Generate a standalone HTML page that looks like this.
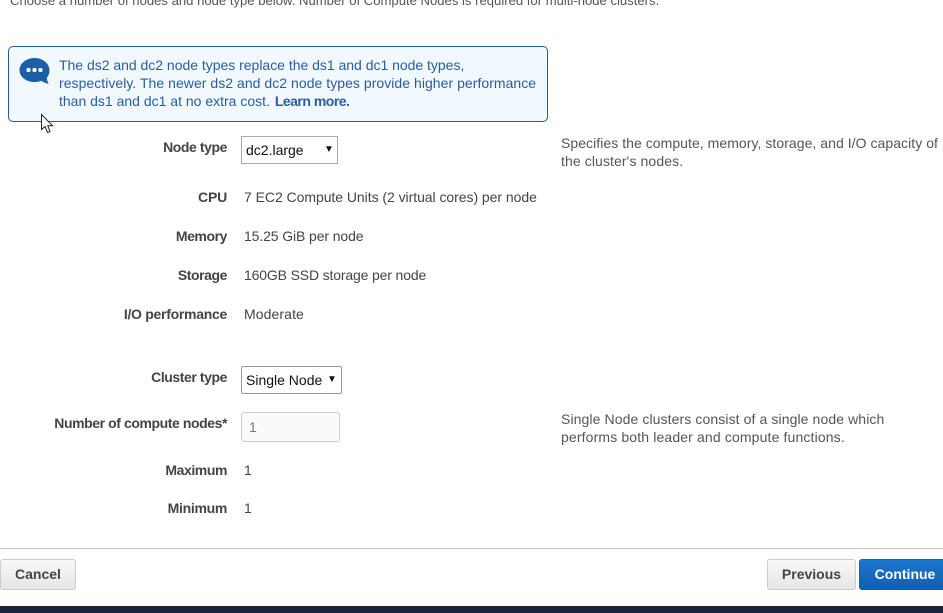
<!DOCTYPE html>
<html><head><meta charset="utf-8">
<style>
html,body{margin:0;padding:0;background:#fff;}
body{width:943px;height:613px;position:relative;overflow:hidden;font-family:"Liberation Sans",sans-serif;font-size:14px;color:#444;}
.t{position:absolute;white-space:nowrap;line-height:18px;}
.l{position:absolute;right:716px;white-space:nowrap;line-height:18px;font-weight:bold;color:#444;letter-spacing:-.42px;}
.v{position:absolute;left:244px;white-space:nowrap;line-height:18px;color:#444;}
.h{position:absolute;left:561px;white-space:nowrap;line-height:18px;color:#555;}
.sel{position:absolute;background:#fff;border:1px solid #aaa;box-sizing:border-box;color:#111;}
.btn{position:absolute;box-sizing:border-box;top:559px;height:31px;border-radius:3px;text-align:center;line-height:29px;font-weight:bold;}
</style></head><body>
<div class="t" style="left:10px;top:-8px;color:#555;font-size:13.1px">Choose a number of nodes and node type below. Number of Compute Nodes is required for multi-node clusters.</div>

<div style="position:absolute;left:8px;top:46px;width:540px;height:76px;box-sizing:border-box;border:1px solid #1f5f96;border-radius:5px;background:#f1f9ff"></div>
<svg style="position:absolute;left:19px;top:57px" width="32" height="29" viewBox="0 0 32 29"><path d="M15.500 1C23.800 1 30.500 6.500 30.500 13.200C30.500 16.200 29.500 18.800 27.800 20.800C28 23.500 28.800 25.500 29.800 27C27 26.300 24.300 25 22.300 23.700C20.300 24.500 18 25 15.500 25C7.200 25 0.500 19.800 0.500 13.200C0.500 6.500 7.200 1 15.500 1Z" fill="#1a5fa8"/><rect x="7.500" y="11" width="4" height="4" rx="1.500" fill="#fff"/><rect x="13.500" y="11" width="4" height="4" rx="1.500" fill="#fff"/><rect x="19.500" y="11" width="4" height="4" rx="1.500" fill="#fff"/></svg>
<div class="t" style="left:59px;top:56px;color:#2a5c9e;letter-spacing:-.016px">The ds2 and dc2 node types replace the ds1 and dc1 node types,</div>
<div class="t" style="left:59px;top:74px;color:#2a5c9e;letter-spacing:.04px">respectively. The newer ds2 and dc2 node types provide higher performance</div>
<div class="t" style="left:59px;top:92px;color:#2a5c9e">than ds1 and dc1 at no extra cost. <b style="letter-spacing:-.5px;margin-left:1px">Learn more.</b></div>
<svg style="position:absolute;left:40px;top:113px" width="15" height="21" viewBox="0 0 15 21"><path d="M1.500 1.500V16.500L5 13.500L7.500 19.500L10 18.500L7.700 12.700H12.500Z" fill="#fff" stroke="#222" stroke-width="1"/></svg>

<div class="l" style="top:138px">Node type</div>
<div class="sel" style="left:241px;top:136px;width:97px;height:28px;padding:4px 0 0 4px;line-height:18px">dc2.large<span style="position:absolute;left:82px;top:4px;font-size:10px">▼</span></div>

<div class="h" style="top:134px;letter-spacing:.05px">Specifies the compute, memory, storage, and I/O capacity of</div>
<div class="h" style="top:152px;letter-spacing:.1px">the cluster's nodes.</div>

<div class="l" style="top:188px;letter-spacing:-.2px">CPU</div>
<div class="v" style="top:188px;letter-spacing:-.045px">7 EC2 Compute Units (2 virtual cores) per node</div>
<div class="l" style="top:227px">Memory</div>
<div class="v" style="top:227px;letter-spacing:-.11px">15.25 GiB per node</div>
<div class="l" style="top:266px">Storage</div>
<div class="v" style="top:266px;letter-spacing:-.15px">160GB SSD storage per node</div>
<div class="l" style="top:305px;letter-spacing:-.28px">I/O performance</div>
<div class="v" style="top:305px;letter-spacing:.1px">Moderate</div>

<div class="l" style="top:368px">Cluster type</div>
<div class="sel" style="left:241px;top:366px;width:101px;height:28px;border-radius:2px;padding:4px 0 0 4px;line-height:18px;border-color:#999">Single Node<span style="position:absolute;left:85px;top:4px;font-size:10px">▼</span></div>

<div class="l" style="top:414px">Number of compute nodes*</div>
<div style="position:absolute;left:241px;top:412px;width:99px;height:30px;box-sizing:border-box;border:1px solid #ccc;border-radius:3px;background:#fafafa;color:#777;padding:5px 0 0 7px;line-height:18px">1</div>
<div class="h" style="top:410px;letter-spacing:.1px">Single Node clusters consist of a single node which</div>
<div class="h" style="top:428px;letter-spacing:.14px">performs both leader and compute functions.</div>

<div class="l" style="top:461px">Maximum</div>
<div class="v" style="top:461px">1</div>
<div class="l" style="top:499px;letter-spacing:-.3px">Minimum</div>
<div class="v" style="top:499px">1</div>

<div style="position:absolute;left:0;top:548px;width:943px;height:1px;background:#c4c4c4"></div>
<div class="btn" style="left:0;width:76px;border:1px solid #ccc;background:linear-gradient(#f8f8f8,#e6e6e6);color:#444">Cancel</div>
<div class="btn" style="left:767px;width:89px;border:1px solid #ccc;background:linear-gradient(#f8f8f8,#e6e6e6);color:#444">Previous</div>
<div class="btn" style="left:859px;width:90px;border:1px solid #1a5ea8;background:linear-gradient(#1b76ce,#125fb0);color:#fff;padding-left:2px">Continue</div>
<div style="position:absolute;left:0;top:606px;width:943px;height:7px;background:#19233a"></div>
</body></html>
